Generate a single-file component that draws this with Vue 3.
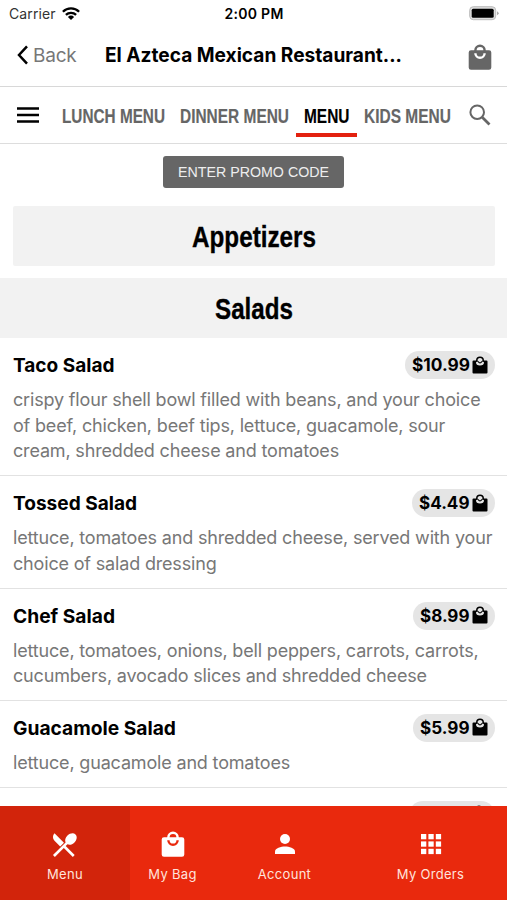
<script setup>
import { h } from 'vue'

const BagIcon = () =>
  h('svg', { viewBox: '0 0 24 26' }, [
    h('path', {
      fill: 'currentColor',
      'fill-rule': 'evenodd',
      d: 'M3 6.300h3.200a5.800 5.800 0 0 1 11.600 0H21q2.300 0 2.300 2.300V23.500q0 2.300-2.300 2.300H3q-2.300 0-2.300-2.300V8.600Q.7 6.300 3 6.300ZM8.600 6.300h6.800a3.400 3.400 0 0 0-6.800 0ZM6.200 9.200a5.800 5.800 0 0 0 11.600 0h-2.400a3.400 3.400 0 0 1-6.800 0Z',
    }),
  ])

const SmallBagIcon = () =>
  h('svg', { viewBox: '0 0 16 18' }, [
    h('path', {
      fill: 'currentColor',
      'fill-rule': 'evenodd',
      d: 'M1.500 4.600H4a4 4 0 0 1 8 0h2.500q1 0 1 1v10.900q0 1-1 1h-13q-1 0-1-1V5.600q0-1 1-1ZM5.500 4.600a2.500 2.500 0 0 1 5 0L8 6.600ZM4 6.300a4 3.300 0 0 0 8 0l-1.400-.8Q8 9.300 5.400 5.500Z',
    }),
  ])

// Horizontal squeeze that turns the bold sans into a condensed face
const squeeze = 0.77

const categories = [
  { label: 'LUNCH MENU', width: 103 },
  { label: 'DINNER MENU', width: 109 },
  { label: 'MENU', width: 45.5, active: true },
  { label: 'KIDS MENU', width: 87 },
]

const items = [
  {
    name: 'Taco Salad', width: 101.5, price: '$10.99', priceWidth: 58,
    lines: ['crispy flour shell bowl filled with beans, and your choice', 'of beef, chicken, beef tips, lettuce, guacamole, sour', 'cream, shredded cheese and tomatoes'],
  },
  {
    name: 'Tossed Salad', width: 124, price: '$4.49', priceWidth: 50.5,
    lines: ['lettuce, tomatoes and shredded cheese, served with your', 'choice of salad dressing'],
  },
  {
    name: 'Chef Salad', width: 102, price: '$8.99', priceWidth: 49.5,
    lines: ['lettuce, tomatoes, onions, bell peppers, carrots, carrots,', 'cucumbers, avocado slices and shredded cheese'],
  },
  {
    name: 'Guacamole Salad', width: 163, price: '$5.99', priceWidth: 49.5,
    lines: ['lettuce, guacamole and tomatoes'],
  },
]
</script>

<template>
  <div class="screen">
    <div class="status">
      <div class="carrier">
        <span>Carrier</span>
        <svg class="wifi" viewBox="0 0 18 13">
          <g fill="none" stroke="#000" stroke-width="2.3">
            <path d="M.9 4.700a11.500 11.500 0 0 1 16.200 0" />
            <path d="M3.900 7.900a7.200 7.200 0 0 1 10.200 0" />
          </g>
          <path d="M9 13 5.900 9.900a4.400 4.400 0 0 1 6.200 0Z" />
        </svg>
      </div>
      <div class="clock">2:00 PM</div>
      <svg class="battery" viewBox="0 0 30 15">
        <rect x=".7" y=".7" width="26" height="13" rx="3.600" fill="#ddd" stroke="#bbb" />
        <rect x="2.700" y="2.700" width="22" height="9" rx="1.500" />
        <path d="M28 5.200q1.700.8 1.700 2t-1.700 2Z" fill="#aaa" />
      </svg>
    </div>

    <header class="header">
      <div class="back">
        <svg class="chevron" viewBox="0 0 12 20"><path d="M10 1.300 2 10l8 8.700" fill="none" stroke="#000" stroke-width="2.500" /></svg>
        <span>Back</span>
      </div>
      <svg class="title" width="298" height="30"><text x="0" y="22" textLength="297" lengthAdjust="spacingAndGlyphs">El Azteca Mexican Restaurant...</text></svg>
      <BagIcon class="header-bag" />
    </header>

    <nav class="nav">
      <svg class="burger" viewBox="0 0 22 16"><path d="M0 1.500h22M0 8h22M0 14.500h22" stroke="#000" stroke-width="2.400" /></svg>
      <div class="tabs">
        <div v-for="c in categories" :key="c.label" class="tab" :class="{ active: c.active }">
          <svg :width="c.width" height="26">
            <text x="0" y="20" :transform="`scale(${squeeze} 1)`" :textLength="c.width / squeeze" lengthAdjust="spacingAndGlyphs">{{ c.label }}</text>
          </svg>
        </div>
      </div>
      <svg class="search" viewBox="0 0 22 22">
        <g fill="none" stroke="#666"><circle cx="8.200" cy="8.200" r="6.800" stroke-width="2" /><path d="m13.200 13.200 7.300 7.300" stroke-width="2.700" /></g>
      </svg>
    </nav>

    <main class="content">
      <button class="promo">
        <svg width="151" height="20"><text x="0" y="15" textLength="151" lengthAdjust="spacingAndGlyphs">ENTER PROMO CODE</text></svg>
      </button>
      <h2 class="section inset">
        <svg width="125" height="40"><text x="0" y="31" :transform="`scale(${squeeze} 1)`" :textLength="124 / squeeze" lengthAdjust="spacingAndGlyphs">Appetizers</text></svg>
      </h2>
      <h2 class="section">
        <svg width="78" height="40"><text x="0" y="31" :transform="`scale(${squeeze} 1)`" :textLength="78 / squeeze" lengthAdjust="spacingAndGlyphs">Salads</text></svg>
      </h2>
      <article v-for="item in items" :key="item.name" class="item">
        <div class="row">
          <svg class="name" :width="item.width" height="28"><text x="0" y="20.500" :textLength="item.width" lengthAdjust="spacingAndGlyphs">{{ item.name }}</text></svg>
          <div class="price">
            <svg :width="item.priceWidth" height="28"><text x="0" y="20.300" :textLength="item.priceWidth" lengthAdjust="spacingAndGlyphs">{{ item.price }}</text></svg>
            <SmallBagIcon class="price-bag" />
          </div>
        </div>
        <p class="desc"><span v-for="line in item.lines" :key="line">{{ line }}</span></p>
      </article>
      <div class="next"><div class="next-price"><SmallBagIcon class="price-bag" /></div></div>
    </main>

    <footer class="bar">
      <div class="dest current">
        <svg class="ico" viewBox="1.500 1 24 24">
          <path fill="#fff" d="m9.400 15.100 3.200-3.200L4.500 3.800a4.500 4.500 0 0 0 0 6.400Zm6.200-1.800c1.800.8 4.200.3 6-1.600 2.200-2.200 2.600-5.300.9-6.900-1.600-1.700-4.700-1.200-6.900.9-1.900 1.800-2.400 4.200-1.600 6L3.200 22.500l1.600 1.600 7.700-7.700 7.700 7.700 1.600-1.600-7.700-7.700Z" />
        </svg>
        <span>Menu</span>
      </div>
      <div class="dest bag"><BagIcon class="ico bagico" /><span>My Bag</span></div>
      <div class="dest account">
        <svg class="ico" viewBox="0 0 28 28"><g fill="#fff"><circle cx="14" cy="9" r="5" /><path d="M4 24v-2.500c0-3.300 6-5 10-5s10 1.700 10 5V24Z" /></g></svg>
        <span>Account</span>
      </div>
      <div class="dest orders">
        <svg class="ico" viewBox="0 0 28 28"><g fill="#fff">
          <rect v-for="n in 9" :key="n" :x="4 + ((n - 1) % 3) * 7.4" :y="4 + Math.floor((n - 1) / 3) * 7.4" width="5.300" height="5.300" />
        </g></svg>
        <span>My Orders</span>
      </div>
    </footer>
  </div>
</template>

<style>
body { margin: 0; background: #fff; }
</style>

<style scoped>
* { box-sizing: border-box; }
svg { display: block; flex: none; overflow: visible; }
.screen { width: 507px; height: 900px; overflow: hidden; display: flex; flex-direction: column; background: #fff; font-family: Inter, sans-serif; color: #000; }
.status { height: 28px; flex: none; display: grid; grid-template-columns: 1fr auto 1fr; align-items: center; padding: 0 8px 2px 9px; font-size: 14px; }
.carrier { display: flex; align-items: center; gap: 6px; color: #333; letter-spacing: 0.1px; }
.wifi { width: 18px; height: 13px; }
.clock { font-weight: 600; font-size: 14px; letter-spacing: 0.3px; }
.battery { width: 30px; height: 15px; justify-self: end; }
.header { height: 59px; flex: none; display: flex; align-items: center; padding: 0 15px 4px 17px; border-bottom: 1px solid #d8d8d8; }
.back { display: flex; align-items: center; width: 88px; gap: 4px; font-size: 19px; color: #777; letter-spacing: -0.2px; }
.chevron { width: 12px; height: 20px; }
.title { font-size: 19.5px; font-weight: 650; }
.header-bag { width: 24px; height: 26px; margin: 3px 0 0 auto; color: #666; }
.nav { height: 57px; flex: none; display: flex; align-items: center; padding: 0 16px 0 17px; border-bottom: 1px solid #ddd; }
.burger { width: 22px; height: 16px; }
.tabs { display: flex; align-self: stretch; margin-left: 15px; }
.tab { padding: 16px 7.5px 0; height: 49.5px; color: #666; }
.tab svg, .section svg { font-family: "Liberation Sans", sans-serif; font-weight: 700; }
.tab svg { font-size: 20px; }
.section text { stroke: currentColor; stroke-width: 0.35px; }
.tab text { stroke: currentColor; stroke-width: 0.15px; }
.tab text, .section text, .title text, .name text, .price text { fill: currentColor; }
.tab.active { color: #000; border-bottom: 4px solid #e3210f; }
.search { width: 22px; height: 22px; margin-left: auto; }
.content { flex: 1; min-height: 0; overflow: hidden; display: flex; flex-direction: column; }
.promo { width: 181px; height: 32px; flex: none; margin: 12px auto 18px 163px; padding: 0; border: 0; border-radius: 3px; background: #666; display: flex; align-items: center; justify-content: center; font-family: "Liberation Sans", sans-serif; font-size: 15.5px; }
.promo text { fill: #eee; }
.section { flex: none; height: 60px; margin: 0; background: #f2f2f2; display: flex; align-items: center; justify-content: center; font-size: 30px; }
.inset { margin: 0 12px 12px 13px; border-radius: 2px; }
.item { flex: none; padding: 13px 12px 11px 13px; border-bottom: 1px solid #e2e2e2; }
.row { display: flex; justify-content: space-between; height: 28px; }
.name { font-size: 19px; font-weight: 650; }
.price { display: flex; align-items: center; height: 28px; padding: 0 7.5px 0 7px; gap: 2px; border-radius: 14px; background: #e5e5e5; font-size: 17px; font-weight: 700; }
.price-bag { width: 16px; height: 18px; margin-top: -1px; }
.desc { margin: 8px 0 0; font-size: 18px; line-height: 25.7px; letter-spacing: -0.17px; color: #777; white-space: nowrap; }
.desc span { display: block; }
.next { display: flex; justify-content: flex-end; padding: 13px 12px 0; }
.next-price { height: 28px; width: 86px; border-radius: 14px; background: #e5e5e5; display: flex; align-items: center; justify-content: flex-end; padding-right: 8px; }
.bar { height: 94px; flex: none; display: flex; background: #e9290d; color: #ffe3dc; font-size: 13px; letter-spacing: 0.3px; }
.dest { display: flex; flex-direction: column; align-items: center; padding-top: 24px; gap: 7px; line-height: 18px; }
.current { width: 130px; background: #d2240b; }
.bag { width: 85px; }
.account { width: 139px; }
.orders { width: 153px; }
.ico { width: 28px; height: 28px; }
.bagico { width: 24px; height: 26px; margin: 1px 0; color: #fff; }
</style>
